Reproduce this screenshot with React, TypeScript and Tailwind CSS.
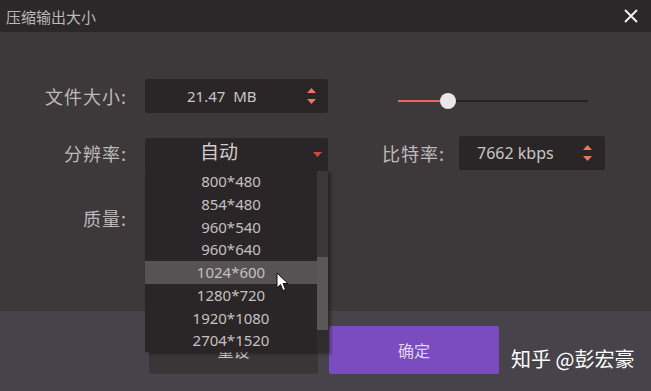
import React from 'react';

const FONT = { fontFamily: '"Noto Sans CJK SC", "Noto Sans", sans-serif' };

const sizes = ['800*480', '854*480', '960*540', '960*640', '1024*600', '1280*720', '1920*1080', '2704*1520'];

// 上下箭头（salmon 色小三角）
const Spinner = () => (
  <div className="flex flex-col items-center gap-[6px]">
    <svg width="9" height="5" viewBox="0 0 9 5"><polygon points="4.5,0 9,5 0,5" fill="#ec7462" /></svg>
    <svg width="9" height="5" viewBox="0 0 9 5"><polygon points="0,0 9,0 4.5,5" fill="#ec7462" /></svg>
  </div>
);

const Label = ({ text, w = 'w-[127px]' }: { text: string; w?: string }) => (
  <div className={`${w} text-right text-[18px] tracking-[1px] text-[#bdb9ba] leading-none`}>{text}</div>
);

export default function App() {
  const hovered = '1024*600';

  return (
    <div style={FONT} className="relative w-[651px] h-[391px] flex flex-col bg-[#3d393b] overflow-hidden">
      {/* 标题栏 */}
      <div className="h-[32px] bg-[#2b2829] flex items-center justify-between pl-[6px] pr-[13px]">
        <span className="text-[15px] text-[#bcb8b9] leading-none">压缩输出大小</span>
        <svg width="14" height="14" viewBox="0 0 14 14">
          <path d="M1 1 L13 13 M13 1 L1 13" stroke="#eeeeee" strokeWidth="2" />
        </svg>
      </div>

      {/* 主体 */}
      <div className="h-[279px] pt-[47px] flex flex-col">
        <div className="flex items-center h-[34px]">
          <Label text="文件大小:" />
          <div className="ml-[18px] w-[183px] h-[34px] bg-[#2a2627] rounded-[2px] flex items-center pl-[42px] pr-[12px]">
            <span className="flex-1 text-[15px] text-[#c9c5c6]" style={{ fontFamily: '"Noto Sans", sans-serif' }}>21.47&nbsp;&nbsp;MB</span>
            <Spinner />
          </div>
          <div className="ml-[70px] mt-[10px] w-[190px] relative flex items-center h-[16px]">
            <div className="h-[2px] w-[44px] bg-[#e8685a]" />
            <div className="h-[2px] flex-1 bg-[#262223] ml-[14px]" />
            <div className="absolute left-[42px] top-0 w-[16px] h-[16px] rounded-full bg-[#e8e6e7]" />
          </div>
        </div>

        <div className="flex items-center h-[34px] mt-[23px]">
          <Label text="分辨率:" />
          <div className="relative ml-[18px] w-[183px] h-[32px] self-end z-10">
            <div className="h-full bg-[#2a2627] rounded-[2px] flex items-center pr-[6px]">
              <span className="w-[148px] text-center text-[19px] text-[#d0cccd] leading-none pb-[7px]">自动</span>
              <svg className="ml-auto" width="9" height="5" viewBox="0 0 9 5"><polygon points="0,0 9,0 4.5,5" fill="#d9453a" /></svg>
            </div>
            {/* 下拉列表 */}
            <div className="absolute top-full left-0 w-[183px] h-[182px] bg-[#2a2627] flex shadow-[3px_2px_3px_rgba(0,0,0,0.35)]">
              <div className="flex-1 flex flex-col">
                {sizes.map((s) => (
                  <div
                    key={s}
                    className={`flex-1 flex items-center justify-center text-[15px] text-[#c4c0c1] ${s === hovered ? 'bg-[#575354]' : ''}`}
                    style={{ fontFamily: '"Noto Sans", sans-serif' }}
                  >
                    {s}
                  </div>
                ))}
              </div>
              <div className="w-[11px] flex flex-col pt-[1px]">
                <div className="h-[86px] bg-[#3b3738]" />
                <div className="h-[73px] bg-[#5b5758]" />
                <div className="flex-1 bg-[#302c2d]" />
              </div>
            </div>
            {/* 鼠标指针 */}
            <svg className="absolute left-[131px] top-[134px]" width="13" height="20" viewBox="0 0 13 20">
              <path d="M1 1 L1 16 L4.5 12.5 L7 18.5 L9.5 17.5 L7 11.5 L12 11.5 Z" fill="#ffffff" stroke="#111" strokeWidth="1" />
            </svg>
          </div>
          <Label text="比特率:" w="w-[117px]" />
          <div className="ml-[14px] w-[146px] h-[34px] bg-[#2a2627] rounded-[2px] flex items-center pl-[18px] pr-[13px]">
            <span className="flex-1 text-[16px] text-[#c9c5c6]" style={{ fontFamily: '"Noto Sans", sans-serif' }}>7662 kbps</span>
            <Spinner />
          </div>
        </div>

        <div className="flex items-center h-[32px] mt-[32px]">
          <Label text="质量:" />
        </div>
      </div>

      {/* 底部按钮 */}
      <div className="flex-1 bg-[#47434a] pt-[15px] pl-[149px] flex items-start gap-[11px]">
        <div className="w-[169px] h-[48px] bg-[#3a3638] rounded-[2px] flex items-center justify-center text-[16px] text-[#c9c5c6]">
          重设
        </div>
        <div className="w-[170px] h-[48px] bg-[#7a4cbf] rounded-[2px] flex items-center justify-center text-[16px] text-[#ddd3ee]">
          确定
        </div>
      </div>

      {/* 水印 */}
      <div className="absolute left-[511px] top-[349px] text-[20px] text-white leading-none whitespace-nowrap">
        知乎 @彭宏豪
      </div>
    </div>
  );
}
